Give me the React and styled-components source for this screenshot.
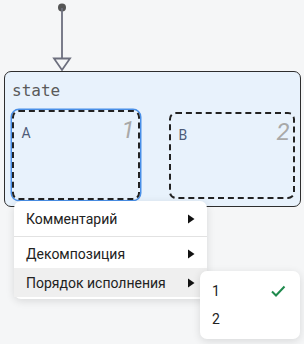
import React from "react";
import styled, { createGlobalStyle } from "styled-components";

const Global = createGlobalStyle`
  html, body { margin: 0; padding: 0; background: #f5f6f7; }
  #root { width: 304px; height: 344px; }
`;

const Canvas = styled.div`
  position: relative;
  width: 304px;
  height: 344px;
  overflow: hidden;
  background: #f5f6f7;
  font-family: Roboto, "Noto Sans", sans-serif;
`;

const Wires = styled.svg`
  position: absolute;
  left: 0;
  top: 0;
`;

const StateNode = styled.div`
  position: absolute;
  left: 4px;
  top: 71px;
  width: 297px;
  height: 136px;
  box-sizing: border-box;
  border: 1.5px solid #2e2e2e;
  border-radius: 7px;
  background: #e8f2fc;
  padding: 9px 0 0 7px;
`;

const StateTitle = styled.div`
  font-family: "DejaVu Sans Mono", "Liberation Mono", monospace;
  font-size: 16px;
  line-height: 20px;
  color: #5a5a5a;
`;

const Child = styled.div`
  position: absolute;
  left: ${(p) => p.$x}px;
  top: ${(p) => p.$y}px;
  width: ${(p) => p.$w}px;
  height: ${(p) => p.$h}px;
  box-sizing: border-box;
  border: 2px dashed #222;
  border-radius: 7px;
  box-shadow: ${(p) => (p.$selected ? "0 0 0 1.5px #4a90e8" : "none")};
  display: flex;
  justify-content: space-between;
  align-items: flex-start;
  padding: 7px 3px 0 8px;
`;

const ChildName = styled.span`
  font-size: 14px;
  line-height: 16px;
  margin-top: 6px;
  color: #4d5b78;
`;

const Order = styled.span`
  font-size: 24px;
  line-height: 22px;
  font-style: italic;
  color: #a9a9a9;
`;

const Menu = styled.div`
  position: absolute;
  left: ${(p) => p.$x}px;
  top: ${(p) => p.$y}px;
  width: ${(p) => p.$w}px;
  background: #fff;
  border-radius: 7px;
  box-shadow: 0 2px 8px rgba(0, 0, 0, 0.12);
  display: flex;
  flex-direction: column;
  padding: ${(p) => p.$pad}px 0;
  box-sizing: border-box;
`;

const Item = styled.div`
  display: flex;
  align-items: center;
  justify-content: space-between;
  height: ${(p) => p.$h || 30}px;
  padding: 0 ${(p) => p.$pr || 12}px 0 ${(p) => p.$pl || 12}px;
  font-size: 14px;
  color: #222;
  background: ${(p) => (p.$active ? "#efefef" : "transparent")};
`;

const Separator = styled.div`
  height: 1px;
  background: #e2e2e2;
  margin: 2px 0;
`;

const Caret = () => (
  <svg width="8" height="10" viewBox="0 0 8 10">
    <path d="M1 0.5 L7.5 5 L1 9.5 Z" fill="#111" />
  </svg>
);

const Check = () => (
  <svg width="16" height="14" viewBox="0 0 16 14">
    <path d="M2 7.5 L6 11.5 L14.5 2.5" fill="none" stroke="#1f8a4d" strokeWidth="2" />
  </svg>
);

export default function App() {
  return (
    <>
      <Global />
      <Canvas>
        <Wires width="304" height="80">
          <circle cx="62" cy="7.5" r="4" fill="#555" />
          <line x1="62" y1="8" x2="62" y2="59" stroke="#6d6f7e" strokeWidth="1.8" />
          <path d="M54 58.5 L70 58.5 L62 70 Z" fill="#f5f6f7" stroke="#6d6f7e" strokeWidth="1.8" strokeLinejoin="miter" />
        </Wires>
        <StateNode>
          <StateTitle>state</StateTitle>
          <Child $x={6.5} $y={37.5} $w={128} $h={90} $selected>
            <ChildName>A</ChildName>
            <Order>1</Order>
          </Child>
          <Child $x={163.5} $y={39.5} $w={126} $h={87}>
            <ChildName>B</ChildName>
            <Order>2</Order>
          </Child>
        </StateNode>
        <Menu $x={14} $y={201} $w={193} $pad={2}>
          <Item $h={31}>
            Комментарий
            <Caret />
          </Item>
          <Separator />
          <Item $h={29}>
            Декомпозиция
            <Caret />
          </Item>
          <Item $h={29} $active>
            Порядок исполнения
            <Caret />
          </Item>
        </Menu>
        <Menu $x={200} $y={271} $w={100} $pad={6}>
          <Item $h={28} $pl={12} $pr={14}>
            1
            <Check />
          </Item>
          <Item $h={28} $pl={12} $pr={14}>
            2
          </Item>
        </Menu>
      </Canvas>
    </>
  );
}
